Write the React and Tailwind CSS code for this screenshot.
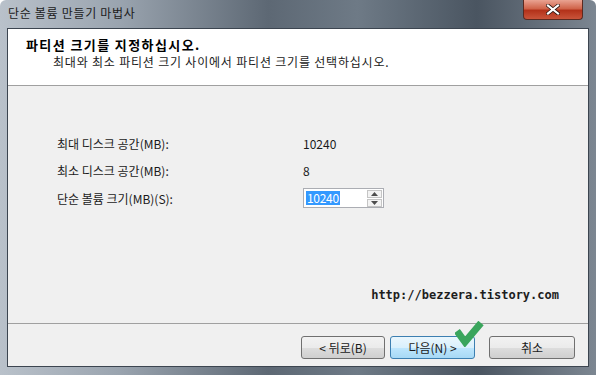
export default function App() {
  const font = { fontFamily: '"Noto Sans CJK KR", "Noto Sans", sans-serif' };
  return (
    <div
      className="w-[596px] h-[375px] flex flex-col overflow-hidden bg-[linear-gradient(90deg,#b9c1ca_0%,#9aa4af_20%,#5d6874_45%,#6e7a86_60%,#4a5561_80%,#7c8691_100%)] rounded-t-[6px]"
      style={font}
    >
      {/* title bar */}
      <div className="h-[28px] flex items-start justify-between shrink-0">
        <div className="pl-[8px] pt-[5px] text-[12px] leading-[16px] tracking-[0.7px] text-[#1b1b1b]">단순 볼륨 만들기 마법사</div>
        <div className="mr-[13px] w-[60px] h-[20px] rounded-b-[4px] border border-[#5b2a20] border-t-0 bg-[linear-gradient(180deg,#e9a392_0%,#d0644a_45%,#b3321a_55%,#c9543a_100%)] flex items-center justify-center">
          <svg width="14" height="11" viewBox="0 0 14 11">
            <path d="M2 1.5 L12 9.5 M12 1.5 L2 9.5" stroke="#2b1510" strokeWidth="3.6" strokeLinecap="square" />
            <path d="M2 1.5 L12 9.5 M12 1.5 L2 9.5" stroke="#ffffff" strokeWidth="2.2" strokeLinecap="square" />
          </svg>
        </div>
      </div>

      {/* client area */}
      <div className="mx-[7px] h-[339px] bg-[#f0f0f0] border border-[#3c4550] flex flex-col">
        {/* header */}
        <div className="h-[57px] bg-white border-b border-[#a0a0a0] shrink-0 pl-[18px] pt-[8px]">
          <div className="text-[13px] leading-[16px] font-bold tracking-[1.4px] text-black">파티션 크기를 지정하십시오.</div>
          <div className="text-[12px] leading-[15px] tracking-[0.8px] text-[#1a1a1a] pl-[27px] mt-[1px]">
            최대와 최소 파티션 크기 사이에서 파티션 크기를 선택하십시오.
          </div>
        </div>

        {/* body */}
        <div className="flex-1 pl-[49px] pt-[50px] text-[12px] leading-[15px] text-[#1a1a1a] relative">
          <div className="flex items-center h-[15px]">
            <div className="w-[246px]">최대 디스크 공간(MB):</div>
            <div>10240</div>
          </div>
          <div className="flex items-center h-[15px] mt-[12px]">
            <div className="w-[246px]">최소 디스크 공간(MB):</div>
            <div>8</div>
          </div>
          <div className="flex items-center mt-[10px]">
            <div className="w-[246px]">단순 볼륨 크기(MB)(S):</div>
            <div className="w-[81px] h-[20px] bg-white border border-[#abadb3] flex items-center justify-between pl-[2px] pr-[1px]">
              <span className="bg-[#3399ff] text-white leading-[14px] px-[1px] tracking-[-0.3px]">10240</span>
              <div className="flex flex-col gap-[1px]">
                <div className="w-[15px] h-[8px] border border-[#c5c5c5] bg-[#f3f3f3] flex items-center justify-center">
                  <svg width="7" height="4" viewBox="0 0 7 4"><path d="M0 4 L3.5 0 L7 4 Z" fill="#4d4d4d" /></svg>
                </div>
                <div className="w-[15px] h-[8px] border border-[#c5c5c5] bg-[#f3f3f3] flex items-center justify-center">
                  <svg width="7" height="4" viewBox="0 0 7 4"><path d="M0 0 L3.5 4 L7 0 Z" fill="#4d4d4d" /></svg>
                </div>
              </div>
            </div>
          </div>
          <div
            className="absolute right-[29px] bottom-[20px] text-[12px] leading-[15px] font-bold text-[#1d1d1d]"
            style={{ fontFamily: '"DejaVu Sans Mono", "Liberation Mono", monospace' }}
          >
            http://bezzera.tistory.com
          </div>
        </div>

        {/* footer */}
        <div className="h-[43px] border-t border-[#a0a0a0] shrink-0 flex items-start justify-end pt-[12px] pr-[13px] relative">
          <button className="w-[84px] h-[23px] rounded-[3px] border border-[#707070] bg-[linear-gradient(180deg,#f2f2f2_0%,#ebebeb_50%,#dddddd_51%,#cfcfcf_100%)] text-[12px] text-[#1a1a1a]">
            &lt; 뒤로(B)
          </button>
          <button className="ml-[5px] w-[85px] h-[23px] rounded-[3px] border border-[#3c7fb1] bg-[linear-gradient(180deg,#eaf6fd_0%,#d9f0fc_50%,#bee6fd_51%,#a7d9f5_100%)] text-[12px] text-[#1a1a1a]">
            다음(N) &gt;
          </button>
          <button className="ml-[14px] w-[86px] h-[23px] rounded-[3px] border border-[#707070] bg-[linear-gradient(180deg,#f2f2f2_0%,#ebebeb_50%,#dddddd_51%,#cfcfcf_100%)] text-[12px] text-[#1a1a1a]">
            취소
          </button>
          <svg className="absolute left-[447px] top-[-3px]" width="30" height="26" viewBox="0 0 30 26">
            <path d="M2 10 L10 21 L26 2" stroke="#3aa55c" strokeWidth="7" fill="none" strokeLinejoin="miter" />
          </svg>
        </div>
      </div>
    </div>
  );
}
